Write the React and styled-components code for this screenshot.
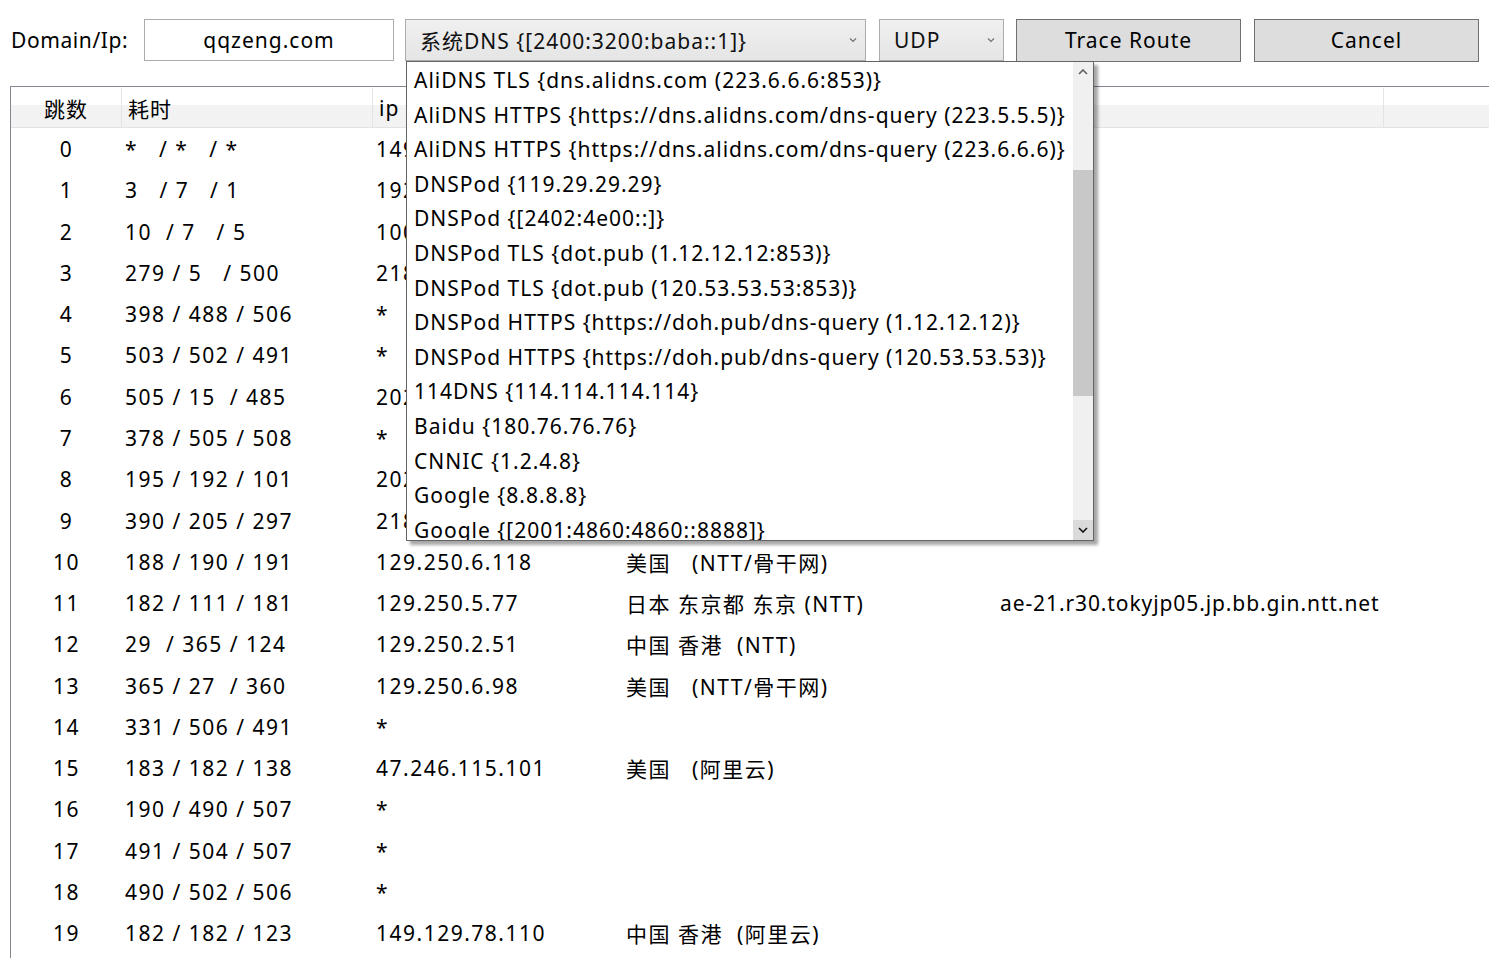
import React from 'react';
import styled, { createGlobalStyle } from 'styled-components';

const GlobalStyle = createGlobalStyle`
    html, body {
        margin: 0;
        padding: 0;
        background: #ffffff;
        overflow: hidden;
    }
    body {
        font-family: "Noto Sans", "Noto Sans CJK SC", sans-serif;
        font-size: 21px;
        letter-spacing: 1px;
        color: #000;
    }
`;

const Page = styled.div`
    width: 1489px;
    height: 958px;
    overflow: hidden;
`;

const Toolbar = styled.div`
    display: flex;
    align-items: center;
    height: 42px;
    padding: 19px 0 0 11px;
    & > * {
        flex-shrink: 0;
    }
`;

const Label = styled.div`
    width: 133px;
    line-height: 42px;
    letter-spacing: 0.6px;
`;

const DomainInput = styled.div`
    box-sizing: border-box;
    width: 250px;
    height: 42px;
    border: 1px solid #ababab;
    display: flex;
    align-items: center;
    justify-content: center;
    margin-right: 11px;
`;

const SelectWrap = styled.div`
    position: relative;
    margin-right: ${(p) => p.$gap}px;
`;

const Select = styled.div`
    box-sizing: border-box;
    width: ${(p) => p.$width}px;
    height: 42px;
    border: 1px solid #acacac;
    background: linear-gradient(#f0f0f0, #e5e5e5);
    display: flex;
    align-items: center;
    padding: 0 8px 0 14px;
    color: #111;
`;

const SelectText = styled.span`
    flex: 1;
    white-space: nowrap;
`;

const Chevron = () => (
    <svg width="8" height="6" viewBox="0 0 8 6">
        <path d="M1 1.5 L4 4.5 L7 1.5" fill="none" stroke="#707070" strokeWidth="1.2" />
    </svg>
);

const Button = styled.div`
    box-sizing: border-box;
    width: 225px;
    height: 43px;
    border: 1px solid #707070;
    background: #dddddd;
    display: flex;
    align-items: center;
    justify-content: center;
    margin-right: 13px;
`;

const Dropdown = styled.div`
    position: absolute;
    top: 42px;
    left: 1px;
    box-sizing: border-box;
    width: 688px;
    height: 480px;
    border: 1px solid #646464;
    background: #ffffff;
    box-shadow: 4px 4px 3px rgba(0, 0, 0, 0.35);
    display: flex;
    z-index: 10;
`;

const OptionList = styled.div`
    flex: 1;
    overflow: hidden;
    padding-top: 1px;
`;

const Option = styled.div`
    height: 34.6px;
    line-height: 34.6px;
    padding-left: 7px;
    white-space: nowrap;
`;

const ScrollBar = styled.div`
    width: 20px;
    background: #f0f0f0;
    display: flex;
    flex-direction: column;
`;

const ScrollArrow = styled.div`
    height: 20px;
    display: flex;
    align-items: center;
    justify-content: center;
    background: ${(p) => (p.$pressed ? '#dadada' : '#f0f0f0')};
`;

const ScrollTrack = styled.div`
    flex: 1;
    padding: 88px 0 124px;
    display: flex;
`;

const Thumb = styled.div`
    flex: 1;
    background: #c8c8c8;
`;

const Arrow = ({ up, color }) => (
    <svg width="10" height="6" viewBox="0 0 10 6">
        <path
            d={up ? 'M1 5 L5 1 L9 5' : 'M1 1 L5 5 L9 1'}
            fill="none"
            stroke={color}
            strokeWidth="1.6"
        />
    </svg>
);

const Table = styled.div`
    margin: 25px 0 0 10px;
    border-left: 1px solid #828790;
    border-top: 1px solid #828790;
    height: 900px;
`;

const Row = styled.div`
    display: grid;
    grid-template-columns: 111px 251px 250px 374px 387px 1fr;
    height: ${(p) => (p.$head ? '39px' : '41.27px')};
    align-items: center;
    white-space: pre;
    letter-spacing: 1.5px;
    ${(p) =>
        p.$head &&
        `
        align-items: stretch;
        padding-top: 1px;
        background: linear-gradient(#ffffff 0%, #ffffff 45%, #f3f3f3 46%, #f2f2f2 100%);
        border-bottom: 1px solid #e3e3e3;
        letter-spacing: 1px;
    `}
`;

const HeadCell = styled.div`
    display: flex;
    align-items: center;
    justify-content: ${(p) => (p.$center ? 'center' : 'flex-start')};
    padding-left: ${(p) => (p.$center ? 0 : 6)}px;
    border-right: 1px solid #e3e3e3;
    &:last-child {
        border-right: none;
    }
`;

const Cell = styled.div`
    text-align: ${(p) => (p.$center ? 'center' : 'left')};
    padding-left: ${(p) => (p.$center ? 0 : 3)}px;
    padding-top: 1px;
    overflow: hidden;
`;

const HostCell = styled(Cell)`
    letter-spacing: 0.9px;
`;

const options = [
    'AliDNS TLS {dns.alidns.com (223.6.6.6:853)}',
    'AliDNS HTTPS {https://dns.alidns.com/dns-query (223.5.5.5)}',
    'AliDNS HTTPS {https://dns.alidns.com/dns-query (223.6.6.6)}',
    'DNSPod {119.29.29.29}',
    'DNSPod {[2402:4e00::]}',
    'DNSPod TLS {dot.pub (1.12.12.12:853)}',
    'DNSPod TLS {dot.pub (120.53.53.53:853)}',
    'DNSPod HTTPS {https://doh.pub/dns-query (1.12.12.12)}',
    'DNSPod HTTPS {https://doh.pub/dns-query (120.53.53.53)}',
    '114DNS {114.114.114.114}',
    'Baidu {180.76.76.76}',
    'CNNIC {1.2.4.8}',
    'Google {8.8.8.8}',
    'Google {[2001:4860:4860::8888]}',
];

const hops = [
    ['*   / *   / *', '149.129.0.1', '', ''],
    ['3   / 7   / 1', '192.168.1.1', '', ''],
    ['10  / 7   / 5', '100.64.0.1', '', ''],
    ['279 / 5   / 500', '218.18.0.1', '', ''],
    ['398 / 488 / 506', '*', '', ''],
    ['503 / 502 / 491', '*', '', ''],
    ['505 / 15  / 485', '202.97.0.1', '', ''],
    ['378 / 505 / 508', '*', '', ''],
    ['195 / 192 / 101', '202.97.0.2', '', ''],
    ['390 / 205 / 297', '218.30.0.1', '', ''],
    ['188 / 190 / 191', '129.250.6.118', '美国   (NTT/骨干网)', ''],
    ['182 / 111 / 181', '129.250.5.77', '日本 东京都 东京 (NTT)', 'ae-21.r30.tokyjp05.jp.bb.gin.ntt.net'],
    ['29  / 365 / 124', '129.250.2.51', '中国 香港  (NTT)', ''],
    ['365 / 27  / 360', '129.250.6.98', '美国   (NTT/骨干网)', ''],
    ['331 / 506 / 491', '*', '', ''],
    ['183 / 182 / 138', '47.246.115.101', '美国   (阿里云)', ''],
    ['190 / 490 / 507', '*', '', ''],
    ['491 / 504 / 507', '*', '', ''],
    ['490 / 502 / 506', '*', '', ''],
    ['182 / 182 / 123', '149.129.78.110', '中国 香港  (阿里云)', ''],
];

export default function App() {
    return (
        <Page>
            <GlobalStyle />
            <Toolbar>
                <Label>Domain/Ip:</Label>
                <DomainInput>qqzeng.com</DomainInput>
                <SelectWrap $gap={13}>
                    <Select $width={461}>
                        <SelectText>系统DNS {'{[2400:3200:baba::1]}'}</SelectText>
                        <Chevron />
                    </Select>
                    <Dropdown>
                        <OptionList>
                            {options.map((o) => (
                                <Option key={o}>{o}</Option>
                            ))}
                        </OptionList>
                        <ScrollBar>
                            <ScrollArrow>
                                <Arrow up color="#606060" />
                            </ScrollArrow>
                            <ScrollTrack>
                                <Thumb />
                            </ScrollTrack>
                            <ScrollArrow $pressed>
                                <Arrow color="#111" />
                            </ScrollArrow>
                        </ScrollBar>
                    </Dropdown>
                </SelectWrap>
                <SelectWrap $gap={12}>
                    <Select $width={125}>
                        <SelectText>UDP</SelectText>
                        <Chevron />
                    </Select>
                </SelectWrap>
                <Button>Trace Route</Button>
                <Button>Cancel</Button>
            </Toolbar>
            <Table>
                <Row $head>
                    <HeadCell $center>跳数</HeadCell>
                    <HeadCell>耗时</HeadCell>
                    <HeadCell>ip</HeadCell>
                    <HeadCell>位置</HeadCell>
                    <HeadCell>主机名</HeadCell>
                    <HeadCell />
                </Row>
                {hops.map((h, i) => (
                    <Row key={i}>
                        <Cell $center>{i}</Cell>
                        <Cell>{h[0]}</Cell>
                        <Cell>{h[1]}</Cell>
                        <Cell>{h[2]}</Cell>
                        <HostCell>{h[3]}</HostCell>
                        <Cell />
                    </Row>
                ))}
            </Table>
        </Page>
    );
}
